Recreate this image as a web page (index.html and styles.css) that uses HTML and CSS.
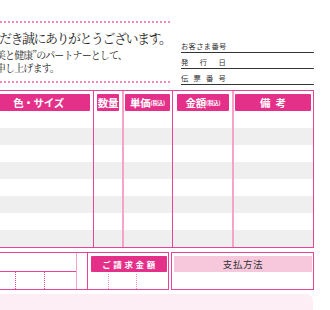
FILE: index.html
```html
<!DOCTYPE html>
<html lang="ja">
<head>
<meta charset="utf-8">
<title>納品書</title>
<link rel="stylesheet" href="styles.css">
</head>
<body>
<div class="page">
  <div class="top">
    <div class="greeting">
      <div class="dots"></div>
      <p class="g1">だき誠にありがとうございます。</p>
      <p class="g2">美と健康”のパートナーとして、</p>
      <p class="g3">申し上げます。</p>
      <div class="dots dots-bottom"></div>
    </div>
    <div class="info">
      <div class="info-row">お客さま番号</div>
      <div class="info-row sp1">発行日</div>
      <div class="info-row sp2">伝票番号</div>
    </div>
  </div>

  <div class="table">
    <div class="th c1"><div class="tb">色・サイズ</div></div>
    <div class="th c2"><div class="tb">数量</div></div>
    <div class="th c3"><div class="tb">単価<small class="tax">(税込)</small></div></div>
    <div class="th c4"><div class="tb">金額<small class="tax">(税込)</small></div></div>
    <div class="th c5"><div class="tb wide">備考</div></div>

    <div class="td c1"></div><div class="td c2"></div><div class="td c3"></div><div class="td c4"></div><div class="td c5"></div>
    <div class="td c1 g"></div><div class="td c2 g"></div><div class="td c3 g"></div><div class="td c4 g"></div><div class="td c5 g"></div>
    <div class="td c1"></div><div class="td c2"></div><div class="td c3"></div><div class="td c4"></div><div class="td c5"></div>
    <div class="td c1 g"></div><div class="td c2 g"></div><div class="td c3 g"></div><div class="td c4 g"></div><div class="td c5 g"></div>
    <div class="td c1"></div><div class="td c2"></div><div class="td c3"></div><div class="td c4"></div><div class="td c5"></div>
    <div class="td c1 g"></div><div class="td c2 g"></div><div class="td c3 g"></div><div class="td c4 g"></div><div class="td c5 g"></div>
    <div class="td c1"></div><div class="td c2"></div><div class="td c3"></div><div class="td c4"></div><div class="td c5"></div>
    <div class="td c1 g"></div><div class="td c2 g"></div><div class="td c3 g"></div><div class="td c4 g"></div><div class="td c5 g"></div>
  </div>

  <div class="bottom">
    <div class="boxa">
      <div class="sl">
        <div class="sl-top"></div>
        <div class="sl-bot">
          <div class="seg s1"></div>
          <div class="seg s2"></div>
          <div class="seg s3"></div>
        </div>
      </div>
      <div class="spacer"></div>
      <div class="sr">
        <div class="sr-head"><div class="hdr">ご請求金額</div></div>
        <div class="digits">
          <div class="d d1"></div>
          <div class="d d2"></div>
          <div class="d d3"></div>
        </div>
      </div>
    </div>
    <div class="boxb">
      <div class="pay">支払方法</div>
    </div>
  </div>
  <div class="band"></div>
</div>
</body>
</html>
```

FILE: styles.css
```css
* { box-sizing: border-box; }

html, body {
  margin: 0;
  padding: 0;
  background: #fff;
}

body {
  width: 330px;
  height: 310px;
  overflow: hidden;
  font-family: "Noto Sans CJK JP", "Noto Sans", sans-serif;
  color: #222;
}

.page {
  margin-left: -16px;
  width: 330px;
}

/* ---------- top ---------- */
.top {
  display: flex;
  align-items: flex-start;
  gap: 11px;
  height: 85px;
}

.greeting {
  width: 186px;
  padding-top: 21px;
}

.dots {
  border-top: 2px dotted #f08cbc;
}

.dots-bottom {
  margin-top: 7px;
}

.g1, .g2, .g3 {
  margin: 0;
  white-space: nowrap;
  font-family: "Noto Serif CJK JP", "Noto Sans CJK JP", serif;
  color: #1e1e1e;
}

.g1 {
  margin-top: 7px;
  font-size: 13px;
  line-height: 16px;
  letter-spacing: -1.5px;
  padding-left: 15px;
}

.g2 {
  margin-top: 2px;
  font-size: 10px;
  line-height: 13px;
  letter-spacing: -0.9px;
  padding-left: 12px;
}

.g3 {
  font-size: 10px;
  line-height: 13px;
  letter-spacing: -0.9px;
  padding-left: 12px;
}

.info {
  width: 133px;
  padding-top: 37px;
}

.info-row {
  height: 16px;
  display: flex;
  align-items: flex-end;
  border-bottom: 1px solid #333;
  font-size: 7.3px;
  line-height: 9px;
  padding-bottom: 1px;
  letter-spacing: 0.3px;
  color: #333;
  white-space: nowrap;
}

.info-row.sp1 { letter-spacing: 11.5px; }
.info-row.sp2 { letter-spacing: 5.2px; }

/* ---------- table ---------- */
.table {
  margin-top: 5px;
  display: grid;
  grid-template-columns: 109px 30px 49px 61px 79px;
  border: 1px solid #e8449a;
  width: 330px;
}

.c1 { border-right: 1px solid #e8449a; }
.c2 { border-right: 2px solid #f5a3c9; }
.c3 { border-right: 1px solid #e8449a; }
.c4 { border-right: 2px solid #f5a3c9; }

.th {
  padding-top: 3px;
  height: 20px;
}

.th.c1 { padding-left: 2px; padding-right: 3px; }
.th.c2 { padding-left: 3px; padding-right: 3px; }
.th.c3 { padding-left: 1px; padding-right: 2px; }
.th.c4 { padding-left: 4px; padding-right: 3px; }
.th.c5 { padding-left: 1px; padding-right: 2px; }

.tb {
  height: 17px;
  background: #e5308a;
  border-radius: 1px;
  color: #fff;
  font-weight: 700;
  font-size: 10.5px;
  line-height: 17px;
  display: flex;
  align-items: center;
  justify-content: center;
  white-space: nowrap;
  letter-spacing: -0.3px;
}

.tb.wide {
  letter-spacing: 5px;
  padding-left: 5px;
}

.tax {
  font-size: 5.5px;
  font-weight: 700;
  letter-spacing: -0.2px;
  align-self: center;
  margin-top: 1px;
}

.td {
  height: 17px;
}

.td.g {
  background: #efefef;
}

/* ---------- bottom ---------- */
.bottom {
  margin-top: 4px;
  display: flex;
  gap: 2px;
  height: 38px;
}

.boxa {
  width: 185px;
  border: 1px solid #e8449a;
  display: flex;
}

.sl {
  width: 92px;
  border-right: 1px solid #f5a3c9;
  display: flex;
  flex-direction: column;
}

.sl-top {
  height: 19px;
  border-bottom: 1px solid #e8449a;
}

.sl-bot {
  flex: 1;
  display: flex;
}

.seg.s1 { width: 30px; }
.seg.s2 { width: 29px; border-left: 1px dotted #e8449a; }
.seg.s3 { flex: 1; border-left: 1px dotted #e8449a; }

.spacer {
  width: 10px;
}

.sr {
  flex: 1;
  border-left: 1px solid #e8449a;
  display: flex;
  flex-direction: column;
}

.sr-head {
  padding: 3px 1px 0 3px;
}

.hdr {
  height: 16px;
  background: #e5308a;
  border-radius: 1px;
  color: #fff;
  font-weight: 700;
  font-size: 8.5px;
  letter-spacing: 2.6px;
  padding-left: 2px;
  display: flex;
  align-items: center;
  justify-content: center;
  white-space: nowrap;
}

.digits {
  flex: 1;
  display: flex;
  margin-top: 2px;
}

.d.d1 { width: 20px; }
.d.d2 { width: 28px; border-left: 1px dotted #f08cbc; }
.d.d3 { flex: 1; border-left: 1px dotted #f08cbc; }

.boxb {
  width: 143px;
  border: 1px solid #e8449a;
  padding: 3px 1px 0 2px;
}

.pay {
  height: 16px;
  background: #f7c8dc;
  color: #333;
  font-size: 9.5px;
  letter-spacing: 0.6px;
  display: flex;
  align-items: center;
  justify-content: center;
  white-space: nowrap;
}

.band {
  margin-top: 4px;
  width: 329px;
  height: 20px;
  background: #fdeef5;
  border-top-right-radius: 7px;
}
```
